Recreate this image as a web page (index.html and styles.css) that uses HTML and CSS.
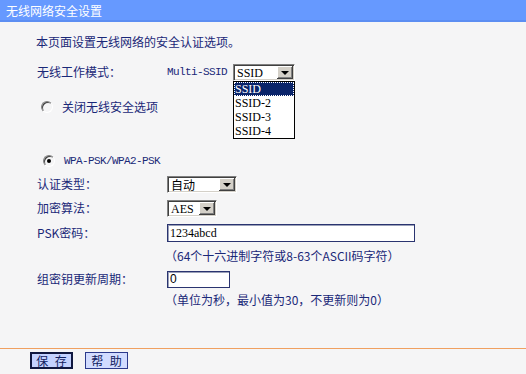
FILE: index.html
```html
<!DOCTYPE html>
<html lang="zh-CN">
<head>
    <meta charset="UTF-8">
    <meta name="viewport" content="width=device-width, initial-scale=1.0">
    <title>无线网络安全设置</title>
    <link rel="stylesheet" href="styles.css">
</head>
<body>
    <div class="header">无线网络安全设置</div>

    <div class="content">
        <div class="row intro">本页面设置无线网络的安全认证选项。</div>

        <div class="row row-mode">
            <span class="label">无线工作模式：</span>
            <span class="mode-name">Multi-SSID</span>
            <div class="select select-ssid">
                <span class="select-text">SSID</span>
                <span class="select-arrow"></span>
                <!-- open dropdown -->
                <ul class="select-list">
                    <li class="selected">SSID</li>
                    <li>SSID-2</li>
                    <li>SSID-3</li>
                    <li>SSID-4</li>
                </ul>
            </div>
        </div>

        <div class="row row-radio-off">
            <span class="radio"></span>
            <span>关闭无线安全选项</span>
        </div>

        <div class="row row-radio-wpa">
            <span class="radio checked"></span>
            <span class="mono">WPA-PSK/WPA2-PSK</span>
        </div>

        <div class="row row-field">
            <span class="label">认证类型：</span>
            <div class="select select-auth">
                <span class="select-text cjk">自动</span>
                <span class="select-arrow"></span>
            </div>
        </div>

        <div class="row row-field">
            <span class="label">加密算法：</span>
            <div class="select select-enc">
                <span class="select-text">AES</span>
                <span class="select-arrow"></span>
            </div>
        </div>

        <div class="row row-psk">
            <span class="label">PSK密码：</span>
            <input type="text" class="text-input input-psk" value="1234abcd">
        </div>

        <div class="row row-hint">
            <span class="hint">（64个十六进制字符或8-63个ASCII码字符）</span>
        </div>

        <div class="row row-psk">
            <span class="label">组密钥更新周期：</span>
            <input type="text" class="text-input input-period" value="0">
        </div>

        <div class="row row-hint2">
            <span class="hint">（单位为秒，最小值为30，不更新则为0）</span>
        </div>
    </div>

    <div class="footer">
        <button type="button" class="btn btn-default">保&nbsp;存</button>
        <button type="button" class="btn">帮&nbsp;助</button>
    </div>
</body>
</html>
```

FILE: styles.css
```css
/* Global styles */
body {
    margin: 0;
    padding: 0;
    background-color: #f5f5f6;
    color: #1a2878;
    font-family: "Noto Sans CJK SC", sans-serif;
    font-size: 12px;
    line-height: 16px;
}

/* Header */
.header {
    height: 20px;
    line-height: 21px;
    padding-left: 6px;
    background-color: #6699ff;
    border-bottom: 2px solid #5c8ef2;
    color: #ffffff;
}

/* Form rows */
.content {
    padding-left: 37px;
}

.row {
    display: flex;
    align-items: center;
}

.label {
    width: 130px;
    flex-shrink: 0;
}

.intro {
    height: 40px;
    margin-left: -1px;
}

.row-mode {
    height: 20px;
}

.mode-name {
    font-family: "Liberation Mono", monospace;
    font-size: 11px;
    letter-spacing: -0.6px;
    margin-right: 6px;
}

.mono {
    font-family: "Liberation Mono", monospace;
    font-size: 11px;
    letter-spacing: -0.6px;
}

.row-radio-off {
    height: 50px;
    padding-left: 4px;
}

.row-radio-wpa {
    height: 22px;
    margin-top: 18px;
    padding-left: 6px;
}

.row-field {
    height: 24px;
}

.row-psk {
    height: 26px;
}

.row-hint {
    height: 20px;
    padding-left: 130px;
}

.row-hint2 {
    height: 16px;
    padding-left: 130px;
}

.hint {
    margin-left: -2px;
}

/* Radio buttons */
.radio {
    width: 12px;
    height: 12px;
    box-sizing: border-box;
    border-radius: 50%;
    border: 1px solid;
    border-color: #808080 #ffffff #ffffff #808080;
    box-shadow: inset 1px 1px 0 #404040;
    background-color: #f5f5f6;
    margin-right: 9px;
    position: relative;
}

.radio.checked::after {
    content: "";
    position: absolute;
    left: 3px;
    top: 3px;
    width: 4px;
    height: 4px;
    border-radius: 50%;
    background-color: #000000;
}

/* Select boxes */
.select {
    position: relative;
    display: flex;
    align-items: stretch;
    height: 17px;
    box-sizing: border-box;
    border: 1px solid;
    border-color: #808080 #ffffff #ffffff #808080;
    box-shadow: inset 1px 1px 0 #404040, inset -1px -1px 0 #d4d0c8;
    background-color: #ffffff;
    color: #000000;
    padding: 1px 1px 1px 2px;
}

.select-ssid {
    width: 62px;
}

.select-auth {
    width: 70px;
}

.select-enc {
    width: 50px;
}

.select-text {
    flex: 1;
    padding-left: 1px;
    font-family: "Liberation Serif", serif;
    font-size: 12px;
    line-height: 14px;
}

.select-text.cjk {
    font-family: "Noto Sans CJK SC", sans-serif;
}

.select-arrow {
    width: 16px;
    box-sizing: border-box;
    background-color: #d4d0c8;
    box-shadow: inset -1px -1px 0 #404040, inset 1px 1px 0 #ffffff, inset -2px -2px 0 #808080;
    position: relative;
}

.select-arrow::after {
    content: "";
    position: absolute;
    left: 4px;
    top: 5px;
    border-left: 4px solid transparent;
    border-right: 4px solid transparent;
    border-top: 4px solid #000000;
}

.select-list {
    position: absolute;
    left: -1px;
    top: 16px;
    width: 62px;
    margin: 0;
    padding: 0;
    list-style: none;
    box-sizing: border-box;
    border: 1px solid #000000;
    background-color: #ffffff;
    z-index: 5;
}

.select-list li {
    height: 14px;
    line-height: 14px;
    padding-left: 1px;
    font-family: "Liberation Serif", serif;
    font-size: 12px;
}

.select-list li.selected {
    background-color: #0a246a;
    color: #ffffff;
    outline: 1px dotted #ffffff;
    outline-offset: -1px;
}

/* Text inputs */
.text-input {
    height: 18px;
    box-sizing: border-box;
    border: 1px solid #2a3470;
    box-shadow: inset 1px 1px 0 #9aa0b8;
    background-color: #ffffff;
    padding: 0 2px;
    margin: 0;
    color: #000000;
    font-family: "Liberation Serif", serif;
    font-size: 12px;
}

.input-psk {
    width: 248px;
}

.input-period {
    width: 63px;
    height: 17px;
    font-family: "Liberation Sans", sans-serif;
}

/* Footer with buttons */
.footer {
    margin-top: 40px;
    border-top: 1px solid #f0a060;
    padding: 3px 0 0 30px;
    display: flex;
    gap: 12px;
}

.btn {
    height: 17px;
    padding: 0;
    width: 43px;
    box-sizing: border-box;
    border: 1px solid #2c3a8c;
    background-color: #d2dcff;
    color: #102060;
    font-family: "Noto Sans CJK SC", sans-serif;
    font-size: 12px;
    line-height: 14px;
    word-spacing: 4px;
    cursor: pointer;
}

.btn-default {
    border: 2px solid #101840;
    background-color: #c4d2ff;
}
```
